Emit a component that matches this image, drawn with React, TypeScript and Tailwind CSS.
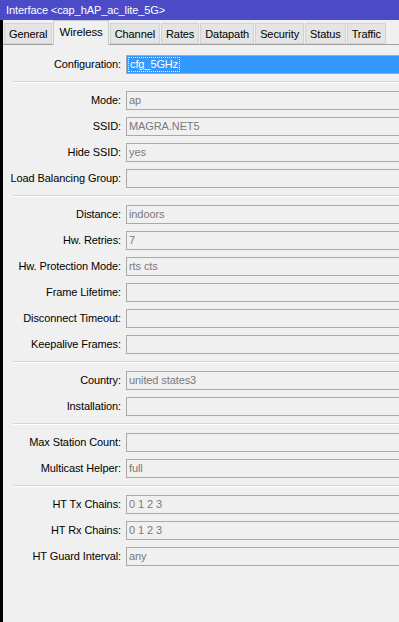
import React from "react";

type Row = { label: string; value?: string };

const groups: Row[][] = [
  [
    { label: "Mode", value: "ap" },
    { label: "SSID", value: "MAGRA.NET5" },
    { label: "Hide SSID", value: "yes" },
    { label: "Load Balancing Group" },
  ],
  [
    { label: "Distance", value: "indoors" },
    { label: "Hw. Retries", value: "7" },
    { label: "Hw. Protection Mode", value: "rts cts" },
    { label: "Frame Lifetime" },
    { label: "Disconnect Timeout" },
    { label: "Keepalive Frames" },
  ],
  [
    { label: "Country", value: "united states3" },
    { label: "Installation" },
  ],
  [
    { label: "Max Station Count" },
    { label: "Multicast Helper", value: "full" },
  ],
  [
    { label: "HT Tx Chains", value: "0 1 2 3" },
    { label: "HT Rx Chains", value: "0 1 2 3" },
    { label: "HT Guard Interval", value: "any" },
  ],
];

const tabs = [
  "General",
  "Wireless",
  "Channel",
  "Rates",
  "Datapath",
  "Security",
  "Status",
  "Traffic",
];

function Field({ label, value }: Row) {
  return (
    <div className="flex items-center h-[26px]">
      <div className="w-[123px] shrink-0 text-right pr-[5px] whitespace-nowrap text-[11px] text-black">
        {label}:
      </div>
      <div className="w-[280px] shrink-0 h-[19px] border border-[#a9a9a9] bg-[#f0f0f0] px-[2px] text-[11px] leading-[17px] text-[#7a7a7a] whitespace-nowrap">
        {value}
      </div>
    </div>
  );
}

function Separator() {
  return <div className="ml-[10px] h-[2px] bg-[#d5d5d5] border-b border-white my-[4px]" />;
}

export default function App() {
  return (
    <div
      className="w-[399px] h-[622px] overflow-hidden bg-[#f0f0f0] flex flex-col tracking-[-0.1px]"
      style={{ fontFamily: '"Liberation Sans", Arial, sans-serif' }}
    >
      {/* title bar */}
      <div className="h-[20px] bg-[#4b4bc8] text-white text-[11px] leading-[20px] pl-[6px] shrink-0">
        Interface &lt;cap_hAP_ac_lite_5G&gt;
      </div>

      <div className="flex-1 border-l-[3px] border-black flex flex-col">
        {/* tabs */}
        <div className="flex items-end gap-[1px] h-[25px] pl-[1px] border-b border-[#a0a0a0]">
          {tabs.map((t) =>
            t === "Wireless" ? (
              <div
                key={t}
                className="h-[25px] px-[5px] -mb-[1px] bg-[#f0f0f0] border border-b-0 border-[#c8c8c8] text-[11.5px] leading-[22px] text-black"
              >
                {t}
              </div>
            ) : (
              <div
                key={t}
                className="h-[21px] px-[4px] bg-[#e4e4e4] border border-[#d2d2d2] text-[11px] leading-[20px] text-black"
              >
                {t}
              </div>
            )
          )}
        </div>

        {/* configuration */}
        <div className="flex items-center h-[26px] mt-[6px]">
          <div className="w-[123px] shrink-0 text-right pr-[5px] text-[11px] text-black">
            Configuration:
          </div>
          <div className="w-[280px] shrink-0 h-[19px] border border-[#a9a9a9] bg-[#3399ff] p-[1px]">
            <span className="inline-block h-[15px] px-[1px] border border-dotted border-[#e8f2ff] text-white text-[11px] leading-[13px] align-top">
              cfg_5GHz
            </span>
          </div>
        </div>

        <Separator />

        {groups.map((g, i) => (
          <div key={i}>
            {g.map((r) => (
              <Field key={r.label} label={r.label} value={r.value} />
            ))}
            {i < groups.length - 1 && <Separator />}
          </div>
        ))}
      </div>
    </div>
  );
}
